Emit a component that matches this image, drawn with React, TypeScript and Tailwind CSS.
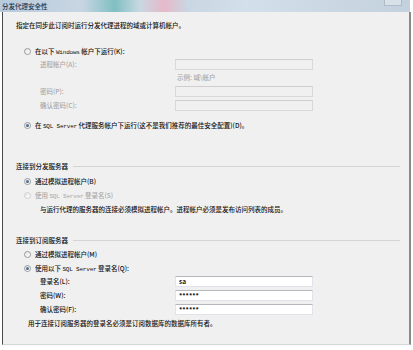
import React from "react";

const font = { fontFamily: '"Noto Sans CJK SC", "Noto Sans", sans-serif' };

function M({ children }: { children: React.ReactNode }) {
  return (
    <span className="text-[6px] tracking-[-0.2px]" style={{ fontFamily: '"Liberation Mono", monospace' }}>
      {children}
    </span>
  );
}

function Radio({ checked, disabled }: { checked?: boolean; disabled?: boolean }) {
  return (
    <span
      className={`flex items-center justify-center w-[7px] h-[7px] rounded-full border bg-gradient-to-br from-[#e4e4e4] to-[#ffffff] shrink-0 ${
        disabled ? "border-[#d0d0d0]" : "border-[#9a9a9a]"
      }`}
    >
      {checked && <span className="block w-[3px] h-[3px] rounded-full bg-[#4a6f93]" />}
    </span>
  );
}

function RadioRow({
  label,
  checked,
  disabled,
  mt,
}: {
  label: React.ReactNode;
  checked?: boolean;
  disabled?: boolean;
  mt: string;
}) {
  return (
    <div className={`flex items-center h-[13px] pl-[21px] gap-[4px] ${mt}`}>
      <Radio checked={checked} disabled={disabled} />
      <span className={disabled ? "text-[#a8a8a8]" : "text-[#111]"}>{label}</span>
    </div>
  );
}

function InputRow({
  label,
  value,
  disabled,
  mt,
}: {
  label: string;
  value?: string;
  disabled?: boolean;
  mt: string;
}) {
  return (
    <div className={`flex items-center h-[13px] pl-[37px] ${mt}`}>
      <span className={`w-[135px] ${disabled ? "text-[#a8a8a8]" : "text-[#111]"}`}>{label}</span>
      <div
        className={`w-[138px] h-[11px] flex items-center pl-[3px] border ${
          disabled
            ? "bg-[#f0f0f0] border-[#d9d9d9] border-t-[#cfcfcf]"
            : "bg-white border-[#e2e3ea] border-t-[#b5b7bd]"
        }`}
      >
        <span className="text-[#111] leading-none font-bold">{value}</span>
      </div>
    </div>
  );
}

function Header({ label, mt }: { label: string; mt: string }) {
  return (
    <div className={`flex items-center h-[13px] pl-[13px] pr-[9px] ${mt}`}>
      <span className="text-[#111]">{label}</span>
      <div className="flex-1 ml-[5px] h-[2px] border-t border-[#d5d5d5] border-b-white" />
    </div>
  );
}

export default function App() {
  return (
    <div className="w-[413px] h-[350px] bg-white overflow-hidden text-[6.5px] leading-[13px] font-medium" style={font}>
      {/* title bar */}
      <div className="relative h-[12px] w-[410px] flex items-center pl-[2px] bg-[linear-gradient(90deg,#b9cadb_0%,#c8d6e3_20%,#7fbfc2_28%,#c7d8e2_34%,#e6b9c9_40%,#c9d7e4_46%,#d3dfe9_60%,#c3d1de_100%)]">
        <span className="text-[#1d3550] leading-none">分发代理安全性</span>
        <div className="absolute right-[8px] top-0 w-[18px] h-[6px] bg-[#d8e0e8] border border-t-0 border-[#b0bcc8]" />
      </div>
      {/* panel */}
      <div className="ml-[2px] w-[409px] h-[333px] bg-[#f0f0f0] border-l border-l-[#4a4a4a] border-r-2 border-r-[#8a8a8a] border-b border-b-[#d6d6d6] pt-[7px]">
        <div className="h-[13px] pl-[13px] flex items-center text-[#111]">
          指定在同步此订阅时运行分发代理进程的域或计算机帐户。
        </div>

        <RadioRow mt="mt-[13px]" label={<>在以下 <M>Windows</M> 帐户下运行(K):</>} />
        <InputRow mt="mt-0" label="进程帐户(A):" disabled />
        <div className="h-[13px] pl-[174px] flex items-center text-[#a8a8a8]">示例: 域\帐户</div>
        <InputRow mt="mt-[1px]" label="密码(P):" disabled />
        <InputRow mt="mt-[1px]" label="确认密码(C):" disabled />
        <RadioRow
          mt="mt-[7px]"
          checked
          label={<>在 <M>SQL Server</M> 代理服务帐户下运行(这不是我们推荐的最佳安全配置)(D)。</>}
        />

        <Header mt="mt-[28px]" label="连接到分发服务器" />
        <RadioRow mt="mt-[2px]" checked label="通过模拟进程帐户(B)" />
        <RadioRow mt="mt-[1px]" disabled label={<>使用 <M>SQL Server</M> 登录名(S)</>} />
        <div className="h-[13px] mt-[1px] pl-[37px] flex items-center text-[#111]">
          与运行代理的服务器的连接必须模拟进程帐户。进程帐户必须是发布访问列表的成员。
        </div>

        <Header mt="mt-[18px]" label="连接到订阅服务器" />
        <RadioRow mt="mt-[1px]" label="通过模拟进程帐户(M)" />
        <RadioRow mt="mt-[1px]" checked label={<>使用以下 <M>SQL Server</M> 登录名(Q):</>} />
        <InputRow mt="mt-0" label="登录名(L):" value="sa" />
        <InputRow mt="mt-[1px]" label="密码(W):" value="******" />
        <InputRow mt="mt-[1px]" label="确认密码(F):" value="******" />
        <div className="h-[13px] mt-[1px] pl-[25px] flex items-center text-[#111]">
          用于连接订阅服务器的登录名必须是订阅数据库的数据库所有者。
        </div>
      </div>
    </div>
  );
}
